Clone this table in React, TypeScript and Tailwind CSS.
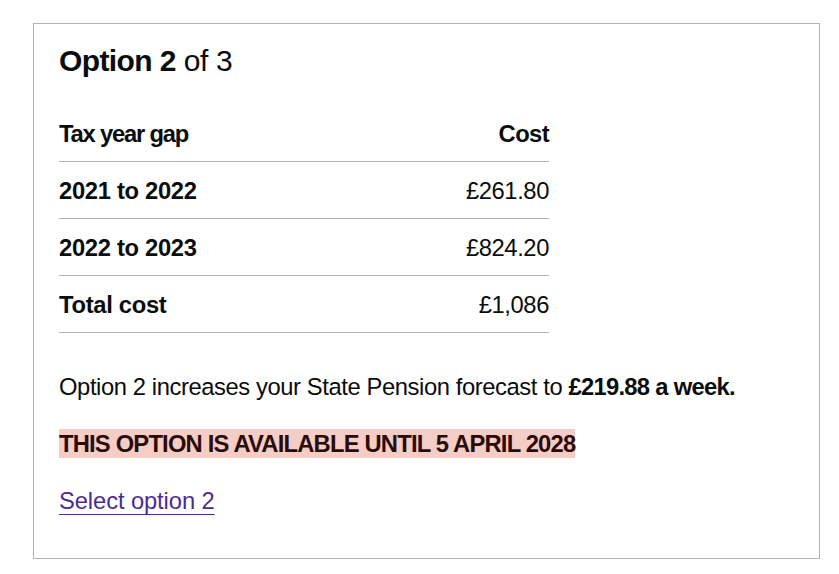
const rows = [
  { year: '2021 to 2022', cost: '£261.80' },
  { year: '2022 to 2023', cost: '£824.20' },
  { year: 'Total cost', cost: '£1,086' },
];

export default function App() {
  return (
    <div className="min-h-[574px] bg-white pl-[33px] pt-[23px] font-['Liberation_Sans',Arial,sans-serif] text-[#0b0c0c]">
      <div className="w-[787px] h-[536px] border border-[#b1b4b6] px-[25px] pt-[18px]">
        <h2 className="text-[30px] leading-[38px] mb-[25px] tracking-[-0.4px]">
          <span className="font-bold tracking-[-0.6px]">Option 2</span> of 3
        </h2>

        <table className="w-[490px] border-collapse text-[23.75px] leading-[31px] tracking-[-0.4px]">
          <thead>
            <tr className="border-b border-[#b1b4b6]">
              <th className="text-left font-bold tracking-[-1.2px] py-[12.5px]">Tax year gap</th>
              <th className="text-right font-bold tracking-[-0.6px] py-[12.5px]">Cost</th>
            </tr>
          </thead>
          <tbody>
            {rows.map(r => (
              <tr key={r.year} className="border-b border-[#b1b4b6]">
                <td className="font-bold tracking-[-0.3px] py-[12.5px]">{r.year}</td>
                <td className="text-right py-[12.5px]">{r.cost}</td>
              </tr>
            ))}
          </tbody>
        </table>

        <p className="mt-[38px] text-[23.75px] leading-[31px] tracking-[-0.4px]">
          Option 2 increases your State Pension forecast to <strong className="font-bold tracking-[-0.7px]">£219.88 a week.</strong>
        </p>

        <p className="mt-[26px] text-[23.75px] leading-[31px]">
          <strong className="font-bold uppercase tracking-[-0.8px] bg-[#f4cdc6] text-[#2a0b06] py-[1px]">This option is available until 5 April 2028</strong>
        </p>

        <p className="mt-[26px] text-[23.75px] leading-[31px] tracking-[-0.1px]">
          <a href="#" className="text-[#4c2c92] underline underline-offset-[5px] decoration-1">Select option 2</a>
        </p>
      </div>
    </div>
  );
}
